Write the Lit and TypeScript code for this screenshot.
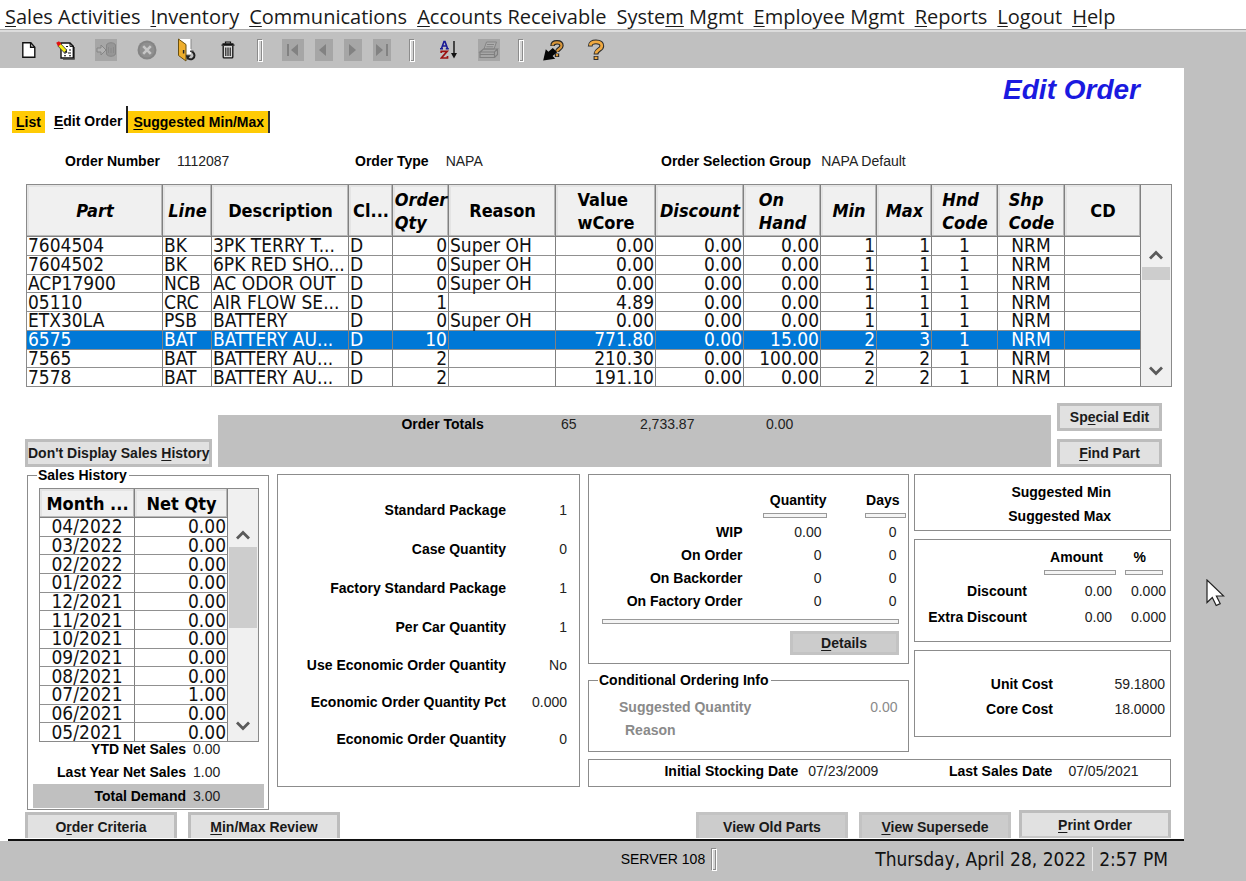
import { LitElement, html, svg, css, nothing } from "lit";
import { customElement, property } from "lit/decorators.js";
import { classMap } from "lit/directives/class-map.js";

// Label with its keyboard mnemonic underlined; -1 means no mnemonic.
const mnemonic = (text: string, at: number) =>
  at < 0 ? html`${text}` : html`${text.slice(0, at)}<u>${text[at]}</u>${text.slice(at + 1)}`;

const MENU: [string, number][] = [
  ["Sales Activities", 0],
  ["Inventory", 0],
  ["Communications", 0],
  ["Accounts Receivable", 0],
  ["System Mgmt", 5],
  ["Employee Mgmt", 0],
  ["Reports", 0],
  ["Logout", 0],
  ["Help", 0],
];

interface Column {
  title: string;
  width: number;
  italic?: boolean;
  align: "left" | "right" | "center";
}

const PART_COLUMNS: Column[] = [
  { title: "Part", width: 136, italic: true, align: "left" },
  { title: "Line", width: 49, italic: true, align: "left" },
  { title: "Description", width: 137, align: "left" },
  { title: "Cl...", width: 44, align: "left" },
  { title: "Order\nQty", width: 56, italic: true, align: "right" },
  { title: "Reason", width: 107, align: "left" },
  { title: "Value\nwCore", width: 100, align: "right" },
  { title: "Discount", width: 88, italic: true, align: "right" },
  { title: "On\nHand", width: 77, italic: true, align: "right" },
  { title: "Min", width: 56, italic: true, align: "right" },
  { title: "Max", width: 55, italic: true, align: "right" },
  { title: "Hnd\nCode", width: 66, italic: true, align: "center" },
  { title: "Shp\nCode", width: 67, italic: true, align: "center" },
  { title: "CD", width: 76, align: "left" },
];

const PART_ROWS: string[][] = [
  ["7604504", "BK", "3PK TERRY T...", "D", "0", "Super OH", "0.00", "0.00", "0.00", "1", "1", "1", "NRM", ""],
  ["7604502", "BK", "6PK RED SHO...", "D", "0", "Super OH", "0.00", "0.00", "0.00", "1", "1", "1", "NRM", ""],
  ["ACP17900", "NCB", "AC ODOR OUT", "D", "0", "Super OH", "0.00", "0.00", "0.00", "1", "1", "1", "NRM", ""],
  ["05110", "CRC", "AIR FLOW SE...", "D", "1", "", "4.89", "0.00", "0.00", "1", "1", "1", "NRM", ""],
  ["ETX30LA", "PSB", "BATTERY", "D", "0", "Super OH", "0.00", "0.00", "0.00", "1", "1", "1", "NRM", ""],
  ["6575", "BAT", "BATTERY AU...", "D", "10", "", "771.80", "0.00", "15.00", "2", "3", "1", "NRM", ""],
  ["7565", "BAT", "BATTERY AU...", "D", "2", "", "210.30", "0.00", "100.00", "2", "2", "1", "NRM", ""],
  ["7578", "BAT", "BATTERY AU...", "D", "2", "", "191.10", "0.00", "0.00", "2", "2", "1", "NRM", ""],
];

const HISTORY_COLUMNS: Column[] = [
  { title: "Month ...", width: 95, align: "center" },
  { title: "Net Qty", width: 93, align: "right" },
];

const HISTORY_ROWS: string[][] = [
  ["04/2022", "0.00"],
  ["03/2022", "0.00"],
  ["02/2022", "0.00"],
  ["01/2022", "0.00"],
  ["12/2021", "0.00"],
  ["11/2021", "0.00"],
  ["10/2021", "0.00"],
  ["09/2021", "0.00"],
  ["08/2021", "0.00"],
  ["07/2021", "1.00"],
  ["06/2021", "0.00"],
  ["05/2021", "0.00"],
];

const PACKAGE_ROWS: [string, string][] = [
  ["Standard Package", "1"],
  ["Case Quantity", "0"],
  ["Factory Standard Package", "1"],
  ["Per Car Quantity", "1"],
  ["Use Economic Order Quantity", "No"],
  ["Economic Order Quantity Pct", "0.000"],
  ["Economic Order Quantity", "0"],
];

const WIP_ROWS: [string, string, string][] = [
  ["WIP", "0.00", "0"],
  ["On Order", "0", "0"],
  ["On Backorder", "0", "0"],
  ["On Factory Order", "0", "0"],
];

/* ---------- toolbar glyphs ---------- */

const iconNew = html`<svg width="14" height="18" viewBox="0 0 14 18">
  <path d="M.8 1.8h8l4 4.4v10H.8z" fill="#fff" stroke="#111" stroke-width="1.4" />
  <path d="M8.6 1.8v4.4h4.2" fill="none" stroke="#111" stroke-width="1.4" />
</svg>`;

const iconNote = html`<svg width="19" height="19" viewBox="0 0 19 19">
  <path d="M5 2h9l3.300 3.400V17H5z" fill="#fff" stroke="#111" stroke-width="1.400" />
  <path d="M18.500 6v12.400H7" fill="none" stroke="#555" stroke-width="1" />
  <path d="M14 2v3.400h3.300" fill="none" stroke="#111" />
  <path d="M9 9h2M13 9h2M8 12h2M12 12h3M8 14.800h2M13 14.800h2M10 5.500h2" stroke="#111" stroke-width="1.100" />
  <path d="M3 3.500 9.500 10.500" stroke="#444" stroke-width="4.200" />
  <path d="M2.800 3.200 9.300 10.200" stroke="#f4ee16" stroke-width="3" />
  <path d="M.2 1.800 3 .2l2.400 2.500L2.200 5.400z" fill="#e01010" />
  <path d="M8.400 11.200 10.600 9l.7 3z" fill="#111" />
</svg>`;

const iconSave = html`<svg width="22" height="22" viewBox="0 0 22 22">
  <path d="M0 0h22v22H0z" fill="#a6a6a6" />
  <path d="M2 9h4V6l5 5-5 5v-3H2z" fill="#b2b2b2" stroke="#858585" />
  <path d="M11.500 6c1-3 8-3 9 0v9c-1 3-8 3-9 0z" fill="#969696" stroke="#868686" />
  <path d="M13.500 8v6M16 9v5M18.500 8v6" fill="none" stroke="#8a8a8a" />
</svg>`;

const iconCancel = html`<svg width="20" height="20" viewBox="0 0 20 20">
  <circle cx="10" cy="10" r="9.500" fill="#858585" />
  <circle cx="10" cy="10" r="7.500" fill="#8f8f8f" />
  <path d="M6.200 6.200 13.800 13.800M13.800 6.200 6.200 13.800" stroke="#c6c6c6" stroke-width="2.600" />
</svg>`;

const iconExit = html`<svg width="20" height="24" viewBox="0 0 20 24">
  <path d="M2 1h12v15H2z" fill="#fff" />
  <path d="M1.500 1 9 6.500V23L1.500 17.500z" fill="#eeae2c" stroke="#6a5010" stroke-width="1" />
  <path d="M6.600 12v3.500" stroke="#222" stroke-width="1.500" />
  <path d="M14 1v10" stroke="#888" />
  <path d="M15 13.500c3 2 3.500 5.500 .500 7.300-1.600 .900-3.300 .500-4.500-.600" fill="none" stroke="#222" stroke-width="2" />
  <path d="M8.800 17.200h5l-3.800 4.800z" fill="#222" />
  <path d="M13 13.300h3.500" stroke="#444" stroke-width="1.500" />
</svg>`;

const iconTrash = html`<svg width="14" height="18" viewBox="0 0 14 18">
  <path d="M.5 4.200h13M1.500 2.800h11" stroke="#111" stroke-width="1.300" />
  <path d="M4.500 2.500V1h5v1.500" fill="none" stroke="#111" stroke-width="1.200" />
  <path d="M2.200 5v11c0 .6.300.9.900.9h7.800c.6 0 .9-.300.900-.900V5" fill="#d8d8d8" stroke="#111" stroke-width="1.300" />
  <path d="M4.800 6.500v8.500M7 6.500v8.500M9.200 6.500v8.500" stroke="#111" stroke-width="1.100" />
</svg>`;

const navIcon = (w: number, shape: unknown) => html`<svg width=${w} height="22" viewBox="0 0 ${w} 22">
  <path d="M0 0h${w}v22H0z" fill="#a6a6a6" />
  ${shape}
</svg>`;

const iconFirst = navIcon(22, svg`<path d="M5 5h2v12H5zM16 5v12l-7-6z" fill="#828282" />`);
const iconPrev = navIcon(18, svg`<path d="M11 5v12l-7-6z" fill="#828282" />`);
const iconNext = navIcon(18, svg`<path d="M5 5v12l7-6z" fill="#828282" />`);
const iconLast = navIcon(18, svg`<path d="M3 5v12l7-6zM13 5h2v12h-2z" fill="#828282" />`);

const iconSort = html`<svg width="18" height="20" viewBox="0 0 18 20">
  <path d="M1.500 8.500 4 1.500h1l2.500 7M2.500 6h4M0 8.800h3M5.800 8.800h3" fill="none" stroke="#1a1a96" stroke-width="1.600" />
  <path d="M1.200 13v-1.700h6L1.300 18h6.200v-2" fill="none" stroke="#9c1010" stroke-width="1.700" />
  <path d="M14 1v15" stroke="#111" stroke-width="1.400" />
  <path d="M11 13h6l-3 5.500z" fill="#111" />
</svg>`;

const iconPrint = html`<svg width="22" height="22" viewBox="0 0 22 22">
  <path d="M0 0h22v22H0z" fill="#a6a6a6" />
  <path d="M6 10 8.500 3h10L16 10zM9 5.500h7M8.300 7.800h7" fill="#acacac" stroke="#858585" />
  <path d="M2 13l3.500-3h14L16.500 13zM2 13v5.500h14.500V13M16.500 18.500l3-3V10M2 15.500h14.500M5 18.500h8" fill="none" stroke="#808080" stroke-width="1.200" />
</svg>`;

const iconWhatsThis = html`<svg width="21" height="21" viewBox="0 0 21 21">
  <path d="M9.500 6C9.500 3.200 11.500 2.300 14 2.300c2.800 0 4.500 1.300 4.500 3.500 0 3.300-4.500 3-4.500 6.200M14 13.500v3.500" fill="none" stroke="#222" stroke-width="4.400" />
  <path d="M9.500 5.500C9.700 3.200 11.500 2.300 14 2.300c2.800 0 4.500 1.300 4.500 3.500 0 3.300-4.500 3-4.500 6M14 14v2.300" fill="none" stroke="#d8963a" stroke-width="2.200" />
  <path d="M.2 20.500 2.800 9.300l2.600 2.500L9.800 8l4.400 4.300-4.600 3.800 2.600 2.600z" fill="#050505" />
</svg>`;

const iconHelp = html`<svg width="18" height="22" viewBox="0 0 18 22">
  <path d="M3.200 7.500C3.200 4 5.500 2.800 9 2.800s5.800 1.400 5.800 4.200c0 3.800-5.800 3.600-5.800 8.500M9 17v4" fill="none" stroke="#2b2b2b" stroke-width="4.800" />
  <path d="M3.200 6.600C3.400 4 5.500 2.800 9 2.800s5.800 1.400 5.800 4.200c0 3.800-5.800 3.600-5.800 7.600M9 17.800v2.300" fill="none" stroke="#f0a940" stroke-width="2.800" />
</svg>`;

/* ---------- data grid with a scroll rail ---------- */

@customElement("data-grid")
export class DataGrid extends LitElement {
  @property({ attribute: false }) columns: Column[] = [];
  @property({ attribute: false }) rows: string[][] = [];
  @property({ type: Number }) selected = -1;
  @property() size = "tall";

  static styles = css`
    :host {
      display: block;
      font-family: "DejaVu Sans Condensed", "DejaVu Sans", sans-serif;
      font-size: 19px;
      color: #111;
    }
    .frame {
      display: flex;
      border: 1px solid #8a8a8a;
      background: #f0f0f0;
    }
    table {
      flex: 1;
      min-width: 0;
      width: 100%;
      table-layout: fixed;
      border-collapse: separate;
      border-spacing: 0;
      background: #fff;
    }
    .tall {
      height: 201px;
    }
    .short {
      height: 252px;
    }
    th {
      box-sizing: border-box;
      padding: 0 0 0 1px;
      background: #f0f0f0;
      border-right: 1px solid #808080;
      border-bottom: 1px solid #808080;
      box-shadow: inset -1px -1px #b8b8b8, inset 2px 2px #e4e4e4;
      font-weight: bold;
      font-size: 18px;
      line-height: 23px;
      color: #000;
    }
    .tall th {
      height: 52px;
    }
    .short th {
      height: 29px;
    }
    .head {
      display: grid;
      justify-content: safe center;
      white-space: pre;
      text-align: left;
    }
    .italic {
      font-style: italic;
    }
    td {
      padding: 0 1px;
      border-right: 1px solid #808080;
      border-bottom: 1px solid #909090;
      line-height: 17px;
      white-space: nowrap;
    }
    tr:last-child td {
      border-bottom: none;
    }
    .left {
      text-align: left;
    }
    .right {
      text-align: right;
    }
    .center {
      text-align: center;
    }
    .selected td {
      background: #0078d7;
      color: #fff;
    }
    .rail {
      flex: none;
      box-sizing: border-box;
      width: 31px;
      display: flex;
      flex-direction: column;
      align-items: stretch;
      padding: 58px 2px 3px 1px;
    }
    .short + .rail {
      padding-top: 34px;
    }
    .rail button {
      flex: none;
      height: 24px;
      padding: 0;
      border: none;
      background: none;
    }
    .rail svg {
      display: block;
      margin: 0 auto;
    }
    .thumb {
      height: 13px;
      background: #cdcdcd;
    }
    .short + .rail .thumb {
      height: 81px;
    }
    .track {
      flex: 1;
    }
  `;

  render() {
    const size = this.size === "short" ? "short" : "tall";
    return html`<div class="frame">
      <table class=${size}>
        <colgroup>
          ${this.columns.map((c) => html`<col style="width:${c.width}px" />`)}
        </colgroup>
        <thead>
          <tr>
            ${this.columns.map(
              (c) => html`<th scope="col"><div class=${classMap({ head: true, italic: !!c.italic })}>${c.title}</div></th>`
            )}
          </tr>
        </thead>
        <tbody>
          ${this.rows.map(
            (row, i) => html`<tr class=${i === this.selected ? "selected" : nothing}>
              ${row.map((cell, j) => html`<td class=${this.columns[j].align}>${cell}</td>`)}
            </tr>`
          )}
        </tbody>
      </table>
      <div class="rail">
        <button aria-label="Scroll up">
          <svg width="14" height="12" viewBox="0 0 14 12"><path d="M1 9.500 7 3.500 13 9.500" fill="none" stroke="#5a5a5a" stroke-width="2.800" /></svg>
        </button>
        <div class="thumb"></div>
        <div class="track"></div>
        <button aria-label="Scroll down">
          <svg width="14" height="12" viewBox="0 0 14 12"><path d="M1 2.500 7 8.500 13 2.500" fill="none" stroke="#5a5a5a" stroke-width="2.800" /></svg>
        </button>
      </div>
    </div>`;
  }
}

/* ---------- application ---------- */

@customElement("app-root")
export class AppRoot extends LitElement {
  static styles = css`
    :host {
      position: relative;
      display: flex;
      flex-direction: column;
      min-height: 100vh;
      background: #c0c0c0;
      color: #000;
      font-family: "Liberation Sans", Arial, sans-serif;
      font-size: 14px;
      line-height: 16px;
    }
    button {
      font: inherit;
      color: inherit;
      padding: 0;
      margin: 0;
    }
    u {
      text-decoration: underline;
      text-decoration-thickness: 1px;
      text-underline-offset: 2px;
    }
    .menu {
      display: flex;
      gap: 10px;
      height: 30px;
      padding: 2px 5px 0;
      box-sizing: border-box;
      background: #fff;
      border-bottom: 1px solid #a8a8a8;
      font-family: "Open Sans", "Noto Sans", sans-serif;
      font-size: 20px;
      line-height: 29px;
    }
    .menu button {
      border: none;
      background: none;
      white-space: nowrap;
      color: #1a1a1a;
    }
    .menu-edge {
      height: 2px;
      background: #dcdcdc;
    }
    .toolbar {
      display: flex;
      align-items: center;
      height: 36px;
      padding-left: 22px;
    }
    .group {
      display: flex;
      align-items: center;
      gap: 20px;
    }
    .nav {
      gap: 11px;
    }
    .sorting {
      padding-left: 6px;
    }
    .helping {
      gap: 23px;
    }
    .toolbar button {
      display: block;
      border: none;
      background: none;
    }
    .toolbar .wide {
      width: 22px;
    }
    .toolbar svg {
      display: block;
      margin: 0 auto;
    }
    .grip {
      box-sizing: border-box;
      width: 6px;
      height: 23px;
      margin: 0 19px 0 18px;
      background: #d4d4d4;
      border: 1px solid #8c8c8c;
      border-right-color: #fff;
      border-bottom-color: #fff;
      box-shadow: inset 1px 1px #fff, inset -1px -1px #8c8c8c;
    }
    .page {
      margin-right: 62px;
      background: #fff;
    }
    h1 {
      margin: 0;
      padding: 6px 44px 0 0;
      text-align: right;
      font-size: 28px;
      line-height: 32px;
      font-style: italic;
      font-weight: bold;
      color: #1a1ae0;
    }
    .tabs {
      display: flex;
      align-items: flex-end;
      height: 27px;
      padding-left: 12px;
    }
    .tabs button {
      border: none;
      background: none;
      font-weight: bold;
      height: 22px;
      line-height: 22px;
      white-space: nowrap;
    }
    .tabs .list {
      background: #ffcb05;
      padding: 0 4px;
    }
    .tabs .current {
      height: 27px;
      padding: 3px 4px 0 9px;
      border-right: 2px solid #222;
    }
    .tabs .minmax {
      background: #ffcb05;
      padding: 0 4px 0 5px;
      border-right: 2px solid #333;
    }
    .info {
      display: grid;
      grid-template-columns: 290fr 306fr 523fr;
      padding: 20px 0 15px 65px;
    }
    .info div {
      display: flex;
      gap: 17px;
    }
    .info div:last-child {
      gap: 10px;
    }
    b,
    .label {
      font-weight: bold;
    }
    .val {
      color: #222;
    }
    .parts {
      margin: 0 12px 0 26px;
    }
    .totals {
      display: grid;
      grid-template-columns: 187px 1fr 105px;
      gap: 6px;
      padding: 16px 22px 0 25px;
    }
    .btn {
      box-sizing: border-box;
      border: 3px solid #bdbdbd;
      background: #e1e1e1;
      font-weight: bold;
      line-height: 16px;
      height: 28px;
      white-space: nowrap;
      color: #1a1a1a;
    }
    .btn.dim {
      border-color: #c3c3c3;
      background: #cccccc;
    }
    .totals .history {
      align-self: end;
    }
    .side {
      display: flex;
      flex-direction: column;
      gap: 8px;
    }
    .bar {
      display: grid;
      grid-template-columns: 266fr 93fr 118fr 99fr 258fr;
      margin-top: 12px;
      height: 52px;
      box-sizing: border-box;
      padding-top: 1px;
      background: #c0c0c0;
      text-align: right;
      line-height: 17px;
    }
    .panels {
      display: grid;
      grid-template-columns: minmax(0, 242fr) minmax(0, 303fr) minmax(0, 583fr);
      column-gap: 8px;
      align-items: start;
      padding: 0 13px 0 27px;
    }
    .panel,
    fieldset {
      box-sizing: border-box;
      border: 1px solid #8c8c8c;
      margin: 0;
      min-width: 0;
    }
    legend {
      margin-left: 9px;
      padding: 0 2px 0 1px;
      font-weight: bold;
    }
    .sales {
      padding: 5px 4px 1px 5px;
    }
    .sales legend {
      margin-left: 4px;
    }
    .sales data-grid {
      margin: 0 5px 0 6px;
    }
    .line {
      display: grid;
      grid-template-columns: 153fr 71fr;
      gap: 7px;
      line-height: 24px;
    }
    .line .label {
      text-align: right;
      white-space: nowrap;
    }
    .line.first {
      line-height: 14px;
      padding-bottom: 4px;
    }
    .line.demand {
      background: #c0c0c0;
    }
    .package {
      margin-top: 7px;
      padding: 16px 12px 28px 0;
    }
    .package div {
      display: grid;
      grid-template-columns: 1fr 61px;
      text-align: right;
      line-height: 37px;
    }
    .package div:nth-child(-n + 4) {
      line-height: 39px;
    }
    .right {
      display: flex;
      flex-direction: column;
      gap: 7px;
      padding-top: 7px;
    }
    .upper {
      display: grid;
      grid-template-columns: minmax(0, 320fr) minmax(0, 257fr);
      gap: 5px;
    }
    .stack {
      display: flex;
      flex-direction: column;
      gap: 8px;
    }
    .figures {
      width: 100%;
      border-collapse: collapse;
      table-layout: fixed;
    }
    .figures th,
    .figures td {
      padding: 0;
      text-align: right;
      white-space: nowrap;
    }
    .wip {
      padding: 17px 2px 8px 0;
    }
    .wip th:nth-child(2) {
      width: 84px;
    }
    .wip th:nth-child(3) {
      width: 79px;
    }
    .wip tbody {
      line-height: 23px;
    }
    .wip td:nth-child(2) {
      padding-right: 5px;
    }
    .wip td:nth-child(3) {
      padding-right: 9px;
    }
    .wip .days {
      padding-right: 6px;
    }
    .rule {
      display: block;
      box-sizing: border-box;
      height: 5px;
      margin: 5px 0 3px auto;
      border: 1px solid #999;
      background: #f4f4f4;
    }
    .w64 {
      width: 64px;
    }
    .w41 {
      width: 41px;
    }
    .w72 {
      width: 72px;
    }
    .w38 {
      width: 38px;
      margin-right: 7px;
    }
    .full {
      margin: 6px 7px 7px 13px;
    }
    .details {
      display: block;
      width: 109px;
      height: 24px;
      margin: 0 7px 0 auto;
    }
    .conditional {
      padding: 8px 10px 9px 0;
      line-height: 23px;
      color: #8a8a8a;
    }
    .conditional legend {
      line-height: 16px;
      color: #000;
    }
    .conditional div {
      display: flex;
      justify-content: space-between;
      padding-left: 30px;
    }
    .conditional .reason {
      padding-left: 36px;
    }
    .suggested {
      padding: 5px 59px 2px 0;
      text-align: right;
      font-weight: bold;
      line-height: 24px;
    }
    .discounts {
      padding: 9px 0 11px;
    }
    .discounts th:nth-child(2) {
      width: 89px;
    }
    .discounts th:nth-child(3) {
      width: 54px;
    }
    .discounts tbody {
      line-height: 26px;
    }
    .discounts td:nth-child(2) {
      padding-right: 4px;
    }
    .discounts td:nth-child(3) {
      padding-right: 4px;
    }
    .discounts .amount {
      padding-right: 13px;
    }
    .discounts .pct {
      padding-right: 24px;
    }
    .costs {
      padding: 21px 5px 14px 0;
      line-height: 25px;
    }
    .costs div {
      display: grid;
      grid-template-columns: 1fr 112px;
      text-align: right;
    }
    .dates {
      display: grid;
      grid-template-columns: 210fr 150fr 105fr 118fr;
      padding: 3px 0 7px;
    }
    .dates .label {
      text-align: right;
    }
    .dates .val {
      padding-left: 10px;
    }
    .dates .val:last-child {
      padding-left: 16px;
    }
    .actions {
      display: flex;
      align-items: flex-end;
      height: 28px;
      padding: 0 13px 0 25px;
    }
    .actions .btn {
      width: 152px;
      height: 26px;
      border-bottom: none;
    }
    .actions .btn + .btn {
      margin-left: 11px;
    }
    .actions .btn.old {
      margin-left: auto;
    }
    .actions .btn.print {
      height: 28px;
      margin-left: 8px;
      border-bottom: 2px solid #c8c8c8;
    }
    .baseline {
      height: 2px;
      margin-left: 8px;
      margin-top: 1px;
      background: #111;
    }
    .status {
      display: flex;
      align-items: center;
      height: 36px;
      padding: 0 78px 0 0;
    }
    .status .server {
      flex: 1;
      text-align: right;
    }
    .status .grip {
      margin: 0 158px 0 6px;
    }
    .status .clock {
      font-family: "DejaVu Sans Condensed", "DejaVu Sans", sans-serif;
      font-size: 19px;
      line-height: 24px;
      color: #111;
      white-space: nowrap;
    }
    .status .clock + .clock {
      margin-left: 6px;
      padding-left: 6px;
      border-left: 1px solid #e8e8e8;
    }
    .pointer {
      position: absolute;
      top: 579px;
      right: 21px;
    }
  `;

  private tool(label: string, icon: unknown, off = false, wide = false) {
    return html`<button class=${wide ? "wide" : nothing} aria-label=${label} ?disabled=${off}>${icon}</button>`;
  }

  render() {
    return html`
      <nav class="menu">${MENU.map(([t, i]) => html`<button>${mnemonic(t, i)}</button>`)}</nav>
      <div class="menu-edge"></div>
      <div class="toolbar">
        <div class="group">
          ${this.tool("New", iconNew)} ${this.tool("Edit", iconNote)} ${this.tool("Save", iconSave, true)}
          ${this.tool("Cancel", iconCancel, true)} ${this.tool("Exit", iconExit)}
          ${this.tool("Delete", iconTrash, false, true)}
        </div>
        <span class="grip"></span>
        <div class="group nav">
          ${this.tool("First", iconFirst, true)} ${this.tool("Previous", iconPrev, true)}
          ${this.tool("Next", iconNext, true)} ${this.tool("Last", iconLast, true)}
        </div>
        <span class="grip"></span>
        <div class="group sorting">${this.tool("Sort", iconSort)} ${this.tool("Print", iconPrint, true)}</div>
        <span class="grip"></span>
        <div class="group helping">${this.tool("Context help", iconWhatsThis)} ${this.tool("Help", iconHelp)}</div>
      </div>

      <main class="page">
        <h1>Edit Order</h1>
        <div class="tabs" role="tablist">
          <button class="list" role="tab">${mnemonic("List", 0)}</button>
          <button class="current" role="tab" aria-selected="true">${mnemonic("Edit Order", 0)}</button>
          <button class="minmax" role="tab">${mnemonic("Suggested Min/Max", 0)}</button>
        </div>
        <div class="info">
          <div><b>Order Number</b><span class="val">1112087</span></div>
          <div><b>Order Type</b><span class="val">NAPA</span></div>
          <div><b>Order Selection Group</b><span class="val">NAPA Default</span></div>
        </div>

        <data-grid class="parts" .columns=${PART_COLUMNS} .rows=${PART_ROWS} .selected=${5}></data-grid>

        <div class="totals">
          <button class="btn history">${mnemonic("Don't Display Sales History", 20)}</button>
          <div class="bar">
            <b>Order Totals</b><span class="val">65</span><span class="val">2,733.87</span><span class="val">0.00</span>
          </div>
          <div class="side">
            <button class="btn">${mnemonic("Special Edit", 2)}</button>
            <button class="btn">${mnemonic("Find Part", 0)}</button>
          </div>
        </div>

        <div class="panels">
          <fieldset class="sales">
            <legend>Sales History</legend>
            <data-grid size="short" .columns=${HISTORY_COLUMNS} .rows=${HISTORY_ROWS}></data-grid>
            <div class="line first"><span class="label">YTD Net Sales</span><span class="val">0.00</span></div>
            <div class="line"><span class="label">Last Year Net Sales</span><span class="val">1.00</span></div>
            <div class="line demand"><span class="label">Total Demand</span><span class="val">3.00</span></div>
          </fieldset>

          <section class="panel package">
            ${PACKAGE_ROWS.map(([l, v]) => html`<div><b>${l}</b><span class="val">${v}</span></div>`)}
          </section>

          <div class="right">
            <div class="upper">
              <div class="stack">
                <section class="panel wip">
                  <table class="figures">
                    <thead>
                      <tr>
                        <th></th>
                        <th scope="col">Quantity<span class="rule w64"></span></th>
                        <th scope="col"><div class="days">Days</div><span class="rule w41"></span></th>
                      </tr>
                    </thead>
                    <tbody>
                      ${WIP_ROWS.map(
                        ([l, q, d]) => html`<tr><th scope="row">${l}</th><td class="val">${q}</td><td class="val">${d}</td></tr>`
                      )}
                    </tbody>
                  </table>
                  <span class="rule full"></span>
                  <button class="btn dim details">${mnemonic("Details", 0)}</button>
                </section>
                <fieldset class="conditional">
                  <legend>Conditional Ordering Info</legend>
                  <div><b>Suggested Quantity</b><span>0.00</span></div>
                  <div class="reason"><b>Reason</b></div>
                </fieldset>
              </div>
              <div class="stack">
                <section class="panel suggested">
                  <div>Suggested Min</div>
                  <div>Suggested Max</div>
                </section>
                <section class="panel discounts">
                  <table class="figures">
                    <thead>
                      <tr>
                        <th></th>
                        <th scope="col"><div class="amount">Amount</div><span class="rule w72"></span></th>
                        <th scope="col"><div class="pct">%</div><span class="rule w38"></span></th>
                      </tr>
                    </thead>
                    <tbody>
                      <tr><th scope="row">Discount</th><td class="val">0.00</td><td class="val">0.000</td></tr>
                      <tr><th scope="row">Extra Discount</th><td class="val">0.00</td><td class="val">0.000</td></tr>
                    </tbody>
                  </table>
                </section>
                <section class="panel costs">
                  <div><b>Unit Cost</b><span class="val">59.1800</span></div>
                  <div><b>Core Cost</b><span class="val">18.0000</span></div>
                </section>
              </div>
            </div>
            <section class="panel dates">
              <span class="label">Initial Stocking Date</span><span class="val">07/23/2009</span>
              <span class="label">Last Sales Date</span><span class="val">07/05/2021</span>
            </section>
          </div>
        </div>

        <div class="actions">
          <button class="btn">${mnemonic("Order Criteria", 1)}</button>
          <button class="btn">${mnemonic("Min/Max Review", 0)}</button>
          <button class="btn dim old">View Old Parts</button>
          <button class="btn dim">${mnemonic("View Supersede", 0)}</button>
          <button class="btn print">${mnemonic("Print Order", 0)}</button>
        </div>
        <div class="baseline"></div>
      </main>

      <footer class="status">
        <span class="server">SERVER 108</span>
        <span class="grip"></span>
        <span class="clock">Thursday, April 28, 2022</span>
        <span class="clock">2:57 PM</span>
      </footer>

      <svg class="pointer" width="19" height="28" viewBox="0 0 19 28">
        <path d="M1 1v22.500l5.300-5 3.900 8 4-1.900-3.800-7.600h7.300z" fill="#fff" stroke="#222" stroke-width="1.200" />
      </svg>
    `;
  }
}
